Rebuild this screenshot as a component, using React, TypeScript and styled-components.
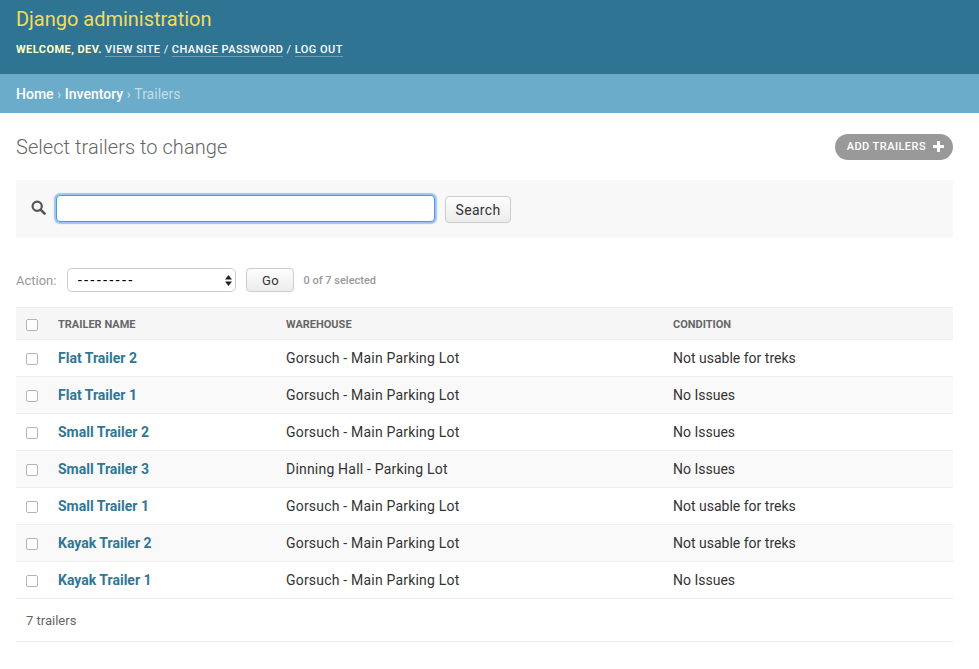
import styled, { createGlobalStyle } from "styled-components";

const trailers = [
  { name: "Flat Trailer 2", warehouse: "Gorsuch - Main Parking Lot", condition: "Not usable for treks" },
  { name: "Flat Trailer 1", warehouse: "Gorsuch - Main Parking Lot", condition: "No Issues" },
  { name: "Small Trailer 2", warehouse: "Gorsuch - Main Parking Lot", condition: "No Issues" },
  { name: "Small Trailer 3", warehouse: "Dinning Hall - Parking Lot", condition: "No Issues" },
  { name: "Small Trailer 1", warehouse: "Gorsuch - Main Parking Lot", condition: "Not usable for treks" },
  { name: "Kayak Trailer 2", warehouse: "Gorsuch - Main Parking Lot", condition: "Not usable for treks" },
  { name: "Kayak Trailer 1", warehouse: "Gorsuch - Main Parking Lot", condition: "No Issues" },
];

const GlobalStyle = createGlobalStyle`
  html, body {
    margin: 0;
    padding: 0;
    background: #fff;
  }
  body {
    font-family: Roboto, "Liberation Sans", sans-serif;
    font-size: 14px;
    color: #333;
  }
  * {
    box-sizing: border-box;
  }
`;

const Header = styled.header`
  height: 74px;
  padding: 9px 16px 0;
  background: #2f7492;
`;

const Branding = styled.h1`
  margin: 0;
  font-size: 20px;
  line-height: 20px;
  font-weight: 400;
  letter-spacing: -0.02px;
  color: #f2dc5d;
`;

const UserTools = styled.div`
  margin-top: 14px;
  font-size: 11px;
  line-height: 14px;
  letter-spacing: 0.45px;
  text-transform: uppercase;
  color: #fff;
`;

const Welcome = styled.strong`
  font-weight: 700;
  color: #ffffcc;
`;

const ToolLink = styled.a`
  font-weight: 500;
  color: #fff;
  text-decoration: none;
  border-bottom: 1px solid rgba(255, 255, 255, 0.3);
`;

const Breadcrumbs = styled.nav`
  height: 39px;
  padding: 0 16px;
  display: flex;
  align-items: center;
  gap: 3.5px;
  font-size: 14px;
  background: #6aacc9;
  color: #c4dce8;
`;

const Crumb = styled.a`
  font-weight: 500;
  color: #fff;
  text-decoration: none;
`;

const Content = styled.main`
  padding: 20px 26px 0 16px;
`;

const TitleRow = styled.div`
  display: flex;
  justify-content: space-between;
  align-items: center;
  height: 27px;
`;

const Title = styled.h2`
  margin: 0;
  font-size: 20px;
  font-weight: 300;
  line-height: 30px;
  letter-spacing: 0.05px;
  color: #666;
`;

const AddButton = styled.a`
  display: flex;
  align-items: center;
  gap: 7px;
  height: 26px;
  padding: 0 9px 0 12px;
  border-radius: 13px;
  background: #999;
  color: #fff;
  font-size: 11px;
  font-weight: 500;
  letter-spacing: 0.45px;
  text-transform: uppercase;
  text-decoration: none;
`;

const SearchBar = styled.div`
  display: flex;
  align-items: center;
  height: 58px;
  margin-top: 20px;
  padding: 0 15px;
  background: #f8f8f8;
`;

const SearchIcon = styled.svg`
  width: 15px;
  height: 15px;
  margin-right: 10px;
  margin-top: -3px;
`;

const SearchInput = styled.input`
  width: 379px;
  height: 27px;
  margin-top: -1px;
  padding: 2px 5px;
  border: 1px solid #4f97e6;
  border-radius: 4px;
  outline: none;
  background: #fff;
  box-shadow: 0 0 1px 2px #9cc5f2;
`;

const Button = styled.button<{ $width: number }>`
  width: ${(p) => p.$width}px;
  height: 27px;
  padding: 0;
  border: 1px solid #ccc;
  border-radius: 4px;
  background: linear-gradient(#fdfdfd, #ececec);
  color: #333;
  font-family: inherit;
  font-size: 14px;
  letter-spacing: 0.3px;
`;

const SearchButton = styled(Button)`
  margin-left: 10px;
  margin-top: 1px;
  padding-top: 1px;
`;

const Actions = styled.div`
  display: flex;
  align-items: center;
  height: 24px;
  margin-top: 30px;
  color: #999;
`;

const ActionLabel = styled.label`
  font-size: 13px;
  margin-right: 11px;
`;

const SelectWrap = styled.div`
  position: relative;
  width: 169px;
  height: 24px;
  margin-right: 10px;
`;

const Select = styled.select`
  appearance: none;
  width: 100%;
  height: 100%;
  padding: 0 0 0 9px;
  border: 1px solid #ccc;
  border-radius: 5px;
  background: #fff;
  color: #000;
  font-family: "Liberation Sans", sans-serif;
  font-size: 14px;
  letter-spacing: 1.65px;
`;

const SelectArrows = styled.svg`
  position: absolute;
  top: 7px;
  right: 4px;
  width: 7px;
  height: 11px;
  pointer-events: none;
`;

const GoButton = styled(Button)`
  height: 24px;
  font-size: 13px;
`;

const Counter = styled.span`
  margin-left: 9px;
  font-size: 11px;
  font-weight: 500;
  color: #999;
`;

const Table = styled.table`
  width: 100%;
  margin-top: 15px;
  border-collapse: collapse;
  table-layout: fixed;
`;

const HeadRow = styled.tr`
  height: 32px;
  background: #f6f6f6;
  border-top: 1px solid #eee;
  border-bottom: 1px solid #eee;
`;

const HeadCell = styled.th<{ $width?: number }>`
  width: ${(p) => (p.$width ? `${p.$width}px` : "auto")};
  padding: 2px 0 0 10px;
  text-align: left;
  font-size: 11px;
  font-weight: 700;
  text-transform: uppercase;
  color: #666;
`;

const Row = styled.tr<{ $alt: boolean }>`
  height: 37px;
  background: ${(p) => (p.$alt ? "#f9f9f9" : "#fff")};
  border-bottom: 1px solid #eee;
`;

const Cell = styled.td`
  padding: 0 0 0 10px;
  font-size: 14px;
  color: #333;
`;

const CheckCell = styled(Cell)`
  padding-top: 2px;
`;

const WarehouseCell = styled(Cell)`
  letter-spacing: 0.2px;
`;

const NameLink = styled.a`
  font-weight: 700;
  color: #2f7795;
  text-decoration: none;
`;

const Check = styled.span`
  display: block;
  width: 12px;
  height: 12px;
  border: 1px solid #b5b5b5;
  border-radius: 2px;
  background: #fff;
`;

const Paginator = styled.p`
  display: flex;
  align-items: center;
  height: 43px;
  margin: 0;
  padding-left: 10px;
  font-size: 13px;
  color: #666;
  border-bottom: 1px solid #eee;
`;

export default function App() {
  return (
    <>
      <GlobalStyle />
      <Header>
        <Branding>Django administration</Branding>
        <UserTools>
          <Welcome>Welcome, dev.</Welcome> <ToolLink>View site</ToolLink> / <ToolLink>Change password</ToolLink> /{" "}
          <ToolLink>Log out</ToolLink>
        </UserTools>
      </Header>
      <Breadcrumbs>
        <Crumb>Home</Crumb>›<Crumb>Inventory</Crumb>›<span>Trailers</span>
      </Breadcrumbs>
      <Content>
        <TitleRow>
          <Title>Select trailers to change</Title>
          <AddButton>
            Add trailers
            <svg width="11" height="11" viewBox="0 0 11 11">
              <path d="M4 0h3v4h4v3H7v4H4V7H0V4h4z" fill="#fff" />
            </svg>
          </AddButton>
        </TitleRow>
        <SearchBar>
          <SearchIcon viewBox="0 0 15 15">
            <circle cx="6.2" cy="6.2" r="4.6" fill="none" stroke="#555" strokeWidth="2.2" />
            <path d="M9.6 9.6l4 4" stroke="#555" strokeWidth="2.6" strokeLinecap="round" />
          </SearchIcon>
          <SearchInput />
          <SearchButton $width={66}>Search</SearchButton>
        </SearchBar>
        <Actions>
          <ActionLabel>Action:</ActionLabel>
          <SelectWrap>
            <Select>
              <option>---------</option>
            </Select>
            <SelectArrows viewBox="0 0 7 11">
              <path d="M3.5 0L7 4.5H0zM3.5 11L0 6.5h7z" fill="#222" />
            </SelectArrows>
          </SelectWrap>
          <GoButton $width={48}>Go</GoButton>
          <Counter>0 of 7 selected</Counter>
        </Actions>
        <Table>
          <thead>
            <HeadRow>
              <HeadCell $width={32}>
                <Check />
              </HeadCell>
              <HeadCell $width={228}>Trailer name</HeadCell>
              <HeadCell $width={387}>Warehouse</HeadCell>
              <HeadCell>Condition</HeadCell>
            </HeadRow>
          </thead>
          <tbody>
            {trailers.map((t, i) => (
              <Row key={t.name} $alt={i % 2 === 1}>
                <CheckCell>
                  <Check />
                </CheckCell>
                <Cell>
                  <NameLink>{t.name}</NameLink>
                </Cell>
                <WarehouseCell>{t.warehouse}</WarehouseCell>
                <Cell>{t.condition}</Cell>
              </Row>
            ))}
          </tbody>
        </Table>
        <Paginator>7 trailers</Paginator>
      </Content>
    </>
  );
}
